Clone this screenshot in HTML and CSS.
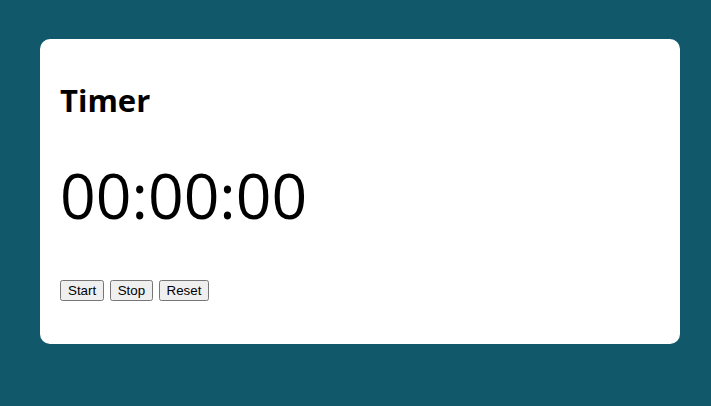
FILE: index.html
```html
<!DOCTYPE html>
<html lang="en">
<head>
<meta charset="utf-8">
<title>Timer</title>
<link rel="stylesheet" href="styles.css">
</head>
<body>
<main class="card">
  <h1 class="title">Timer</h1>
  <div class="display">00:00:00</div>
  <div class="controls">
    <button class="btn">Start</button>
    <button class="btn">Stop</button>
    <button class="btn">Reset</button>
  </div>
</main>
</body>
</html>
```
FILE: styles.css
```css
html, body {
  margin: 0;
  padding: 0;
}
body {
  background: #11596a;
  font-family: "Open Sans", sans-serif;
  padding: 39px 31px 40px 40px;
}
.card {
  background: #fff;
  border-radius: 10px;
  padding: 20px;
  height: 305px;
  box-sizing: border-box;
}
.title {
  font-size: 31px;
  font-weight: 700;
  margin: 20px 0 31px;
  line-height: normal;
  color: #000;
}
.display {
  font-size: 62.5px;
  line-height: normal;
  margin: 0 0 43px;
  color: #000;
}
.controls {
  display: flex;
  gap: 5.5px;
}
.btn {
  font-family: "Liberation Sans", Arial, sans-serif;
  font-size: 13.333px;
  margin: 0;
  padding: 1px 6px;
}
```
